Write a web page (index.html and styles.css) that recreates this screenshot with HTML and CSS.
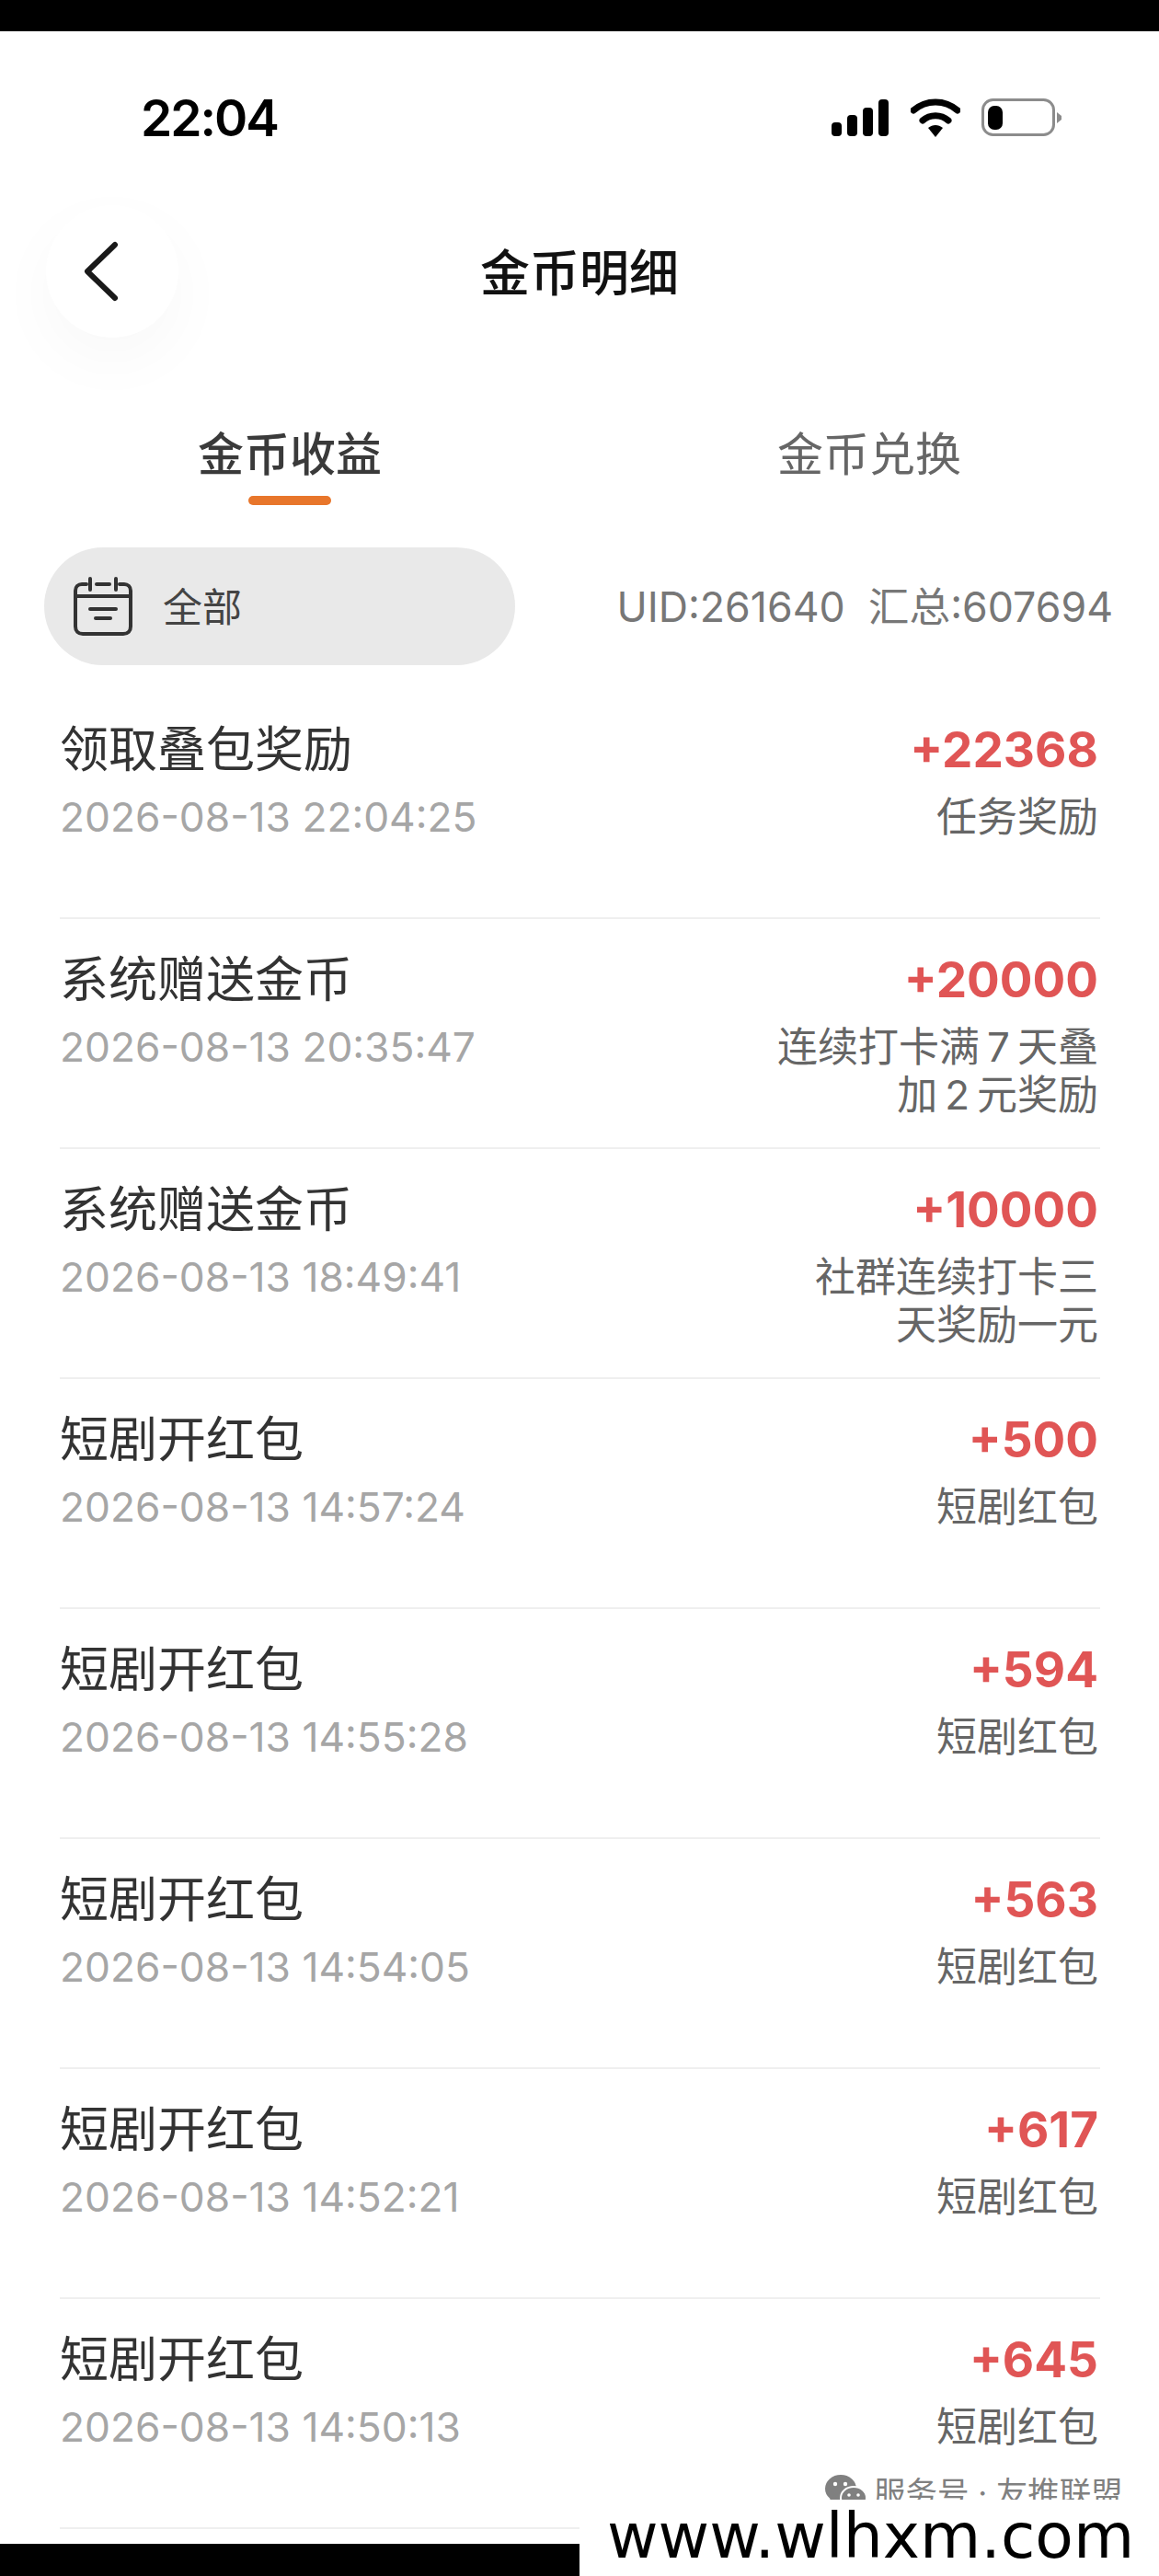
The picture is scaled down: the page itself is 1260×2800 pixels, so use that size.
FILE: index.html
```html
<!DOCTYPE html>
<html lang="zh-CN">
<head>
  <meta charset="UTF-8">
  <title>金币明细</title>
  <link rel="stylesheet" href="styles.css">
</head>
<body>
  <div class="screen">
    <div class="top-bar"></div>

    <div class="status">
      <span class="clock">22:04</span>
      <div class="status-icons">
        <svg class="signal" width="64" height="40" viewBox="0 0 64 40">
          <rect x="1" y="25" width="11" height="15" rx="4"/>
          <rect x="18" y="17" width="11" height="23" rx="4"/>
          <rect x="35" y="9" width="11" height="31" rx="4"/>
          <rect x="52" y="0" width="11" height="40" rx="4"/>
        </svg>
        <svg class="wifi" width="54" height="42" viewBox="0 0 54 42">
          <path d="M3 13C17 1 37 1 51 13" fill="none" stroke="#000" stroke-width="7" stroke-linecap="round"/>
          <path d="M13 24C21 17 33 17 41 24" fill="none" stroke="#000" stroke-width="7" stroke-linecap="round"/>
          <path d="M19 32C24 28 30 28 35 32L27 42Z"/>
        </svg>
        <svg class="battery" width="88" height="42" viewBox="0 0 88 42">
          <rect x="1.5" y="1.5" width="77" height="38" rx="11" fill="none" stroke="#8c8c8c" stroke-width="3"/>
          <rect x="7" y="8" width="16" height="26" rx="7"/>
          <path d="M82 15L87 19V23L82 27Z" fill="#8c8c8c"/>
        </svg>
      </div>
    </div>

    <div class="nav">
      <div class="back-btn">
        <svg width="38" height="66" viewBox="0 0 38 66">
          <path d="M34 4L4 33L34 62" fill="none" stroke="#1a1a1a" stroke-width="6" stroke-linecap="round" stroke-linejoin="round"/>
        </svg>
      </div>
      <h1 class="nav-title">金币明细</h1>
    </div>

    <div class="tabs">
      <div class="tab tab-active">金币收益</div>
      <div class="tab">金币兑换</div>
    </div>

    <div class="filter-row">
      <div class="filter-pill">
        <svg width="64" height="64" viewBox="0 0 64 64">
          <g fill="none" stroke="#333" stroke-width="4" stroke-linecap="round" stroke-linejoin="round">
            <path d="M14 8H9C5 8 2 11 2 15V54C2 59 5 62 10 62H54C59 62 62 59 62 54V15C62 11 59 8 55 8H50"/>
            <path d="M25 8H39"/>
            <path d="M18 2V14"/>
            <path d="M46 2V14"/>
            <path d="M2 21H62"/>
            <path d="M18 35H46"/>
            <path d="M24 45H40"/>
          </g>
        </svg>
        <span class="filter-label">全部</span>
      </div>
      <div class="summary">UID:261640&nbsp; 汇总:607694</div>
    </div>

    <div class="list">
      <div class="row">
        <div class="row-left"><div class="row-title">领取叠包奖励</div><div class="row-time">2026-08-13 22:04:25</div></div>
        <div class="row-right"><div class="amount">+22368</div><div class="note">任务奖励</div></div>
      </div>
      <div class="row">
        <div class="row-left"><div class="row-title">系统赠送金币</div><div class="row-time">2026-08-13 20:35:47</div></div>
        <div class="row-right"><div class="amount">+20000</div><div class="note">连续打卡满&thinsp;7&thinsp;天叠<br>加&thinsp;2&thinsp;元奖励</div></div>
      </div>
      <div class="row">
        <div class="row-left"><div class="row-title">系统赠送金币</div><div class="row-time">2026-08-13 18:49:41</div></div>
        <div class="row-right"><div class="amount">+10000</div><div class="note">社群连续打卡三<br>天奖励一元</div></div>
      </div>
      <div class="row">
        <div class="row-left"><div class="row-title">短剧开红包</div><div class="row-time">2026-08-13 14:57:24</div></div>
        <div class="row-right"><div class="amount">+500</div><div class="note">短剧红包</div></div>
      </div>
      <div class="row">
        <div class="row-left"><div class="row-title">短剧开红包</div><div class="row-time">2026-08-13 14:55:28</div></div>
        <div class="row-right"><div class="amount">+594</div><div class="note">短剧红包</div></div>
      </div>
      <div class="row">
        <div class="row-left"><div class="row-title">短剧开红包</div><div class="row-time">2026-08-13 14:54:05</div></div>
        <div class="row-right"><div class="amount">+563</div><div class="note">短剧红包</div></div>
      </div>
      <div class="row">
        <div class="row-left"><div class="row-title">短剧开红包</div><div class="row-time">2026-08-13 14:52:21</div></div>
        <div class="row-right"><div class="amount">+617</div><div class="note">短剧红包</div></div>
      </div>
      <div class="row">
        <div class="row-left"><div class="row-title">短剧开红包</div><div class="row-time">2026-08-13 14:50:13</div></div>
        <div class="row-right"><div class="amount">+645</div><div class="note">短剧红包</div></div>
      </div>
    </div>

    <div class="watermark">
      <svg width="44" height="38" viewBox="0 0 44 38">
        <ellipse cx="17" cy="15" rx="17" ry="15" fill="#808080"/>
        <path d="M6 24L4 33L14 28Z" fill="#808080"/>
        <ellipse cx="31" cy="25" rx="14" ry="12" fill="#808080" stroke="#fff" stroke-width="2"/>
        <circle cx="11" cy="10" r="2.2" fill="#fff"/>
        <circle cx="22" cy="10" r="2.2" fill="#fff"/>
        <circle cx="26" cy="22" r="1.8" fill="#fff"/>
        <circle cx="36" cy="22" r="1.8" fill="#fff"/>
      </svg>
      <span>服务号 · 友推联盟</span>
    </div>
    <div class="corner-black"></div>
    <div class="site-stamp">www.wlhxm.com</div>
  </div>
</body>
</html>
```

FILE: styles.css
```css
* {
  box-sizing: border-box;
}

html, body {
  margin: 0;
  padding: 0;
  background: #fff;
}

.screen {
  position: relative;
  width: 1260px;
  height: 2800px;
  overflow: hidden;
  background: #fff;
  color: #333;
  font-family: Inter, "Noto Sans CJK SC", sans-serif;
}

.top-bar {
  height: 34px;
  background: #000;
}

.status {
  height: 188px;
  padding: 0 105px 0 153px;
  display: flex;
  align-items: center;
  justify-content: space-between;
}

.clock {
  font-size: 55px;
  font-weight: 600;
  color: #000;
  letter-spacing: -2px;
}

.status-icons {
  display: flex;
  align-items: center;
  gap: 23px;
}

.nav {
  height: 146px;
  display: grid;
  grid-template-columns: 1fr auto 1fr;
  align-items: center;
  padding-left: 50px;
}

.back-btn {
  width: 144px;
  height: 144px;
  border-radius: 50%;
  background: #fff;
  box-shadow: 0 24px 70px rgba(0, 0, 0, 0.03);
  display: flex;
  align-items: center;
  padding-left: 41px;
}

.nav-title {
  margin: -3px 0 0 -50px;
  font-size: 54px;
  font-weight: 500;
  color: #111;
}

.tabs {
  height: 227px;
  display: grid;
  grid-template-columns: 630px 630px;
  padding-top: 88px;
}

.tab {
  position: relative;
  height: 76px;
  line-height: 76px;
  text-align: center;
  font-size: 50px;
  color: #666;
}

.tab-active {
  color: #3a3a3a;
  font-weight: 500;
}

.tab-active::after {
  content: "";
  position: absolute;
  left: 270px;
  top: 83px;
  width: 90px;
  height: 10px;
  border-radius: 5px;
  background: #e8762b;
}

.filter-row {
  height: 128px;
  padding: 0 50px 0 48px;
  display: flex;
  align-items: center;
  justify-content: space-between;
}

.filter-pill {
  width: 512px;
  height: 128px;
  border-radius: 64px;
  background: #e9e9e9;
  padding-left: 32px;
  display: flex;
  align-items: center;
  gap: 33px;
  font-size: 43px;
  color: #444;
}

.filter-label {
  margin-top: -5px;
}

.summary {
  margin-top: -5px;
  font-size: 44.7px;
  color: #777;
}

.list {
  margin-top: 26px;
  padding: 0 64px 0 65px;
}

.row {
  height: 250px;
  border-bottom: 2px solid #efefef;
  padding-top: 28px;
  display: flex;
  justify-content: space-between;
}

.row-title {
  font-size: 53px;
  line-height: 76px;
  color: #333;
}

.row-time {
  margin-top: 9px;
  font-size: 44.3px;
  line-height: 52px;
  color: #a6a6a6;
}

.row-right {
  padding-right: 2px;
  text-align: right;
}

.amount {
  font-size: 53px;
  line-height: 76px;
  font-weight: 700;
  color: #e05555;
}

.note {
  margin-top: 9px;
  font-size: 44px;
  line-height: 52px;
  color: #666;
}

.watermark {
  position: absolute;
  left: 897px;
  top: 2690px;
  width: 330px;
  height: 27px;
  overflow: hidden;
  display: flex;
  align-items: flex-start;
  gap: 9px;
  font-size: 34.5px;
  line-height: 40px;
  color: #808080;
  white-space: nowrap;
}

.corner-black {
  position: absolute;
  left: 0;
  top: 2765px;
  width: 630px;
  height: 35px;
  background: #000;
}

.site-stamp {
  position: absolute;
  left: 630px;
  top: 2717px;
  width: 630px;
  height: 83px;
  background: #fff;
  padding-left: 30px;
  font-family: "DejaVu Sans", sans-serif;
  font-size: 68px;
  line-height: 80px;
  color: #000;
  white-space: nowrap;
}
```
